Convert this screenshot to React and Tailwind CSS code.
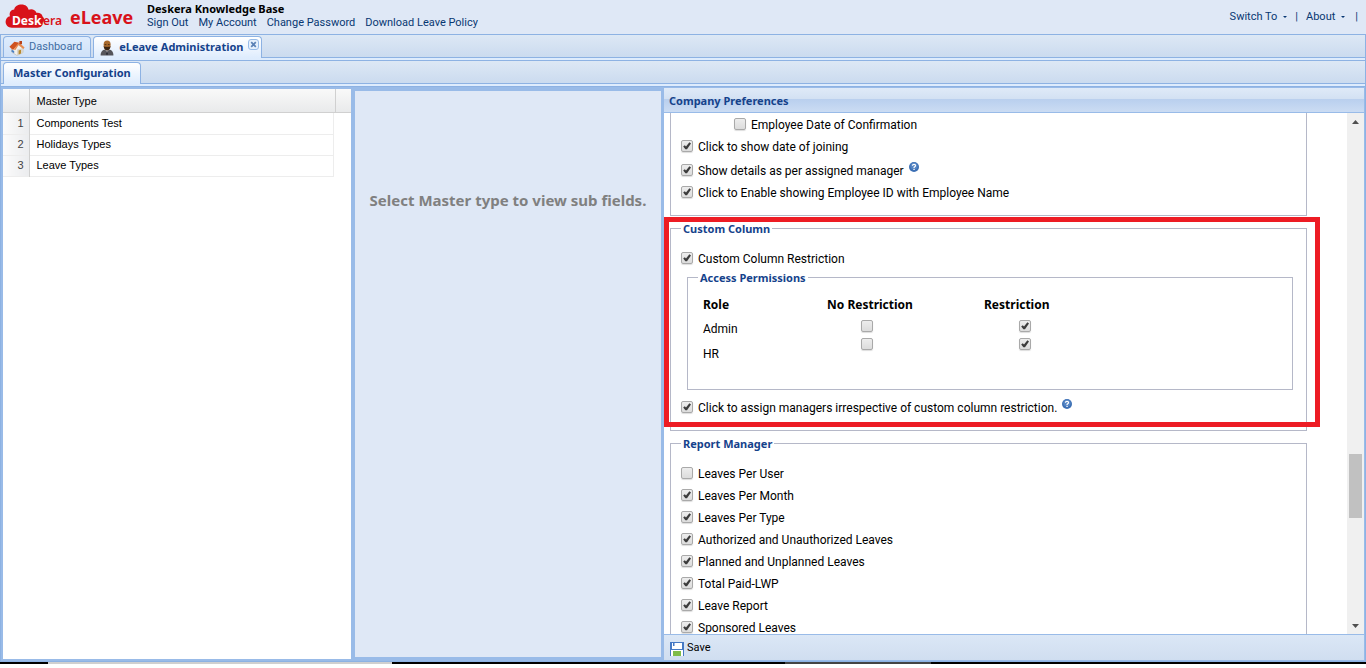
import { useState } from 'react';

const MASTER_TYPES = ['Components Test', 'Holidays Types', 'Leave Types'];

const REPORTS = [
  { label: 'Leaves Per User', on: false },
  { label: 'Leaves Per Month', on: true },
  { label: 'Leaves Per Type', on: true },
  { label: 'Authorized and Unauthorized Leaves', on: true },
  { label: 'Planned and Unplanned Leaves', on: true },
  { label: 'Total Paid-LWP', on: true },
  { label: 'Leave Report', on: true },
  { label: 'Sponsored Leaves', on: true },
];

function Check({ on, id, label }) {
  const [checked, setChecked] = useState(on);
  return (
    <span className="relative block h-3 w-3 shrink-0">
      <input
        id={id}
        type="checkbox"
        aria-label={label}
        checked={checked}
        onChange={(e) => setChecked(e.target.checked)}
        className="block h-3 w-3 appearance-none rounded-xs border border-[#a9a9a9] bg-linear-to-b from-[#ededed] to-[#dcdcdc] shadow-[0_1px_1px_#dddddd]"
      />
      {checked && (
        <svg viewBox="0 0 12 12" className="pointer-events-none absolute inset-0 h-3 w-3">
          <path d="M2.2 6.6 L3.8 5.2 L5 6.4 L8.4 2.2 L10 3.4 L6 9.2 L4.4 9.2 Z" fill="#3c3c3c" />
        </svg>
      )}
    </span>
  );
}

function CheckRow({ id, label, on = true, className = '', help = false }) {
  return (
    <div className={`flex h-[22px] items-center ${className}`}>
      <Check id={id} on={on} />
      <label htmlFor={id} className="pt-0.5 pl-[5px] whitespace-nowrap">{label}</label>
      {help && <HelpIcon />}
    </div>
  );
}

function HelpIcon() {
  return (
    <svg viewBox="0 0 10 10" className="mb-1.5 ml-[5px] h-2.5 w-2.5 shrink-0">
      <circle cx="5" cy="5" r="5" fill="#3c6fb4" />
      <circle cx="5" cy="4" r="3.6" fill="#5585c4" />
      <path d="M3.4 3.8 Q3.5 2.3 5 2.3 Q6.6 2.3 6.6 3.6 Q6.6 4.5 5.1 5.2 V6" fill="none" stroke="#fff" strokeWidth="1.2" />
      <rect x="4.4" y="6.8" width="1.3" height="1.2" fill="#fff" />
    </svg>
  );
}

function Section({ title, className = '', children }) {
  return (
    <fieldset className={`border border-[#b5b8c8] px-2.5 ${className}`}>
      <legend className="px-0.5 font-['Noto_Sans',sans-serif] text-[11px] leading-[15px] font-bold text-[#15428b]">{title}</legend>
      {children}
    </fieldset>
  );
}

function Logo() {
  return (
    <div className="flex h-[34px] w-[141px] shrink-0 items-center">
      <svg viewBox="0 0 66 34" className="h-[34px] w-[66px]">
        <path
          d="M12 27.8 C8 27.8 5.6 25 5.6 21.8 C5.6 18.5 7.6 16.6 10 16.2 C8.8 12.5 11 9.4 14.2 9.4 C14.8 6 18 4.4 21.5 4.4 C25.5 4.4 28 6.6 28.6 9.8 C31.5 8.4 35.5 9.6 36.4 12.8 C39.5 12.4 42 13.8 42.6 16.4 C44.8 18.2 44.6 21 42.8 22.6 C43 25.8 40.6 27.8 37.5 27.8 Z"
          fill="#d8121a"
        />
        <text x="12" y="25" fontSize="12" fontWeight="700" fontFamily="'Noto Sans', sans-serif" fill="#fff">Desk</text>
        <text x="43" y="25" fontSize="12" fontWeight="600" fontFamily="'Noto Sans', sans-serif" fill="#d8121a">era</text>
      </svg>
      <span className="pl-1 font-['Open_Sans',sans-serif] text-[18px] font-bold text-[#d8121a]">eLeave</span>
    </div>
  );
}

function HouseIcon() {
  return (
    <svg viewBox="0 0 16 16" className="h-4 w-4 shrink-0">
      <path d="M2.5 7.5 L9.5 5 L14 8 L14 12.5 L8 15.5 L2.5 12 Z" fill="#f3f0ea" stroke="#b9b4ab" strokeWidth="0.6" />
      <path d="M8 9.5 L14 8 V12.6 L8 15.5 Z" fill="#d9d5cc" />
      <path d="M0.4 6.8 L5.4 1.8 L10.4 2.8 L5.6 8.2 L4 10 Z" fill="#cf5320" />
      <path d="M10 2.4 L15.6 7.4 L14.2 9 L9.6 5 L6.4 10 L4.6 9.4 Z" fill="#e88a4e" />
      <rect x="10.4" y="1" width="2.6" height="3.2" fill="#b8421a" />
      <path d="M9.6 10.6 L12 9.8 V13.4 L9.6 14.5 Z" fill="#b88a2e" />
      <path d="M2.6 9.6 L5.2 11 V13.2 L2.6 11.8 Z" fill="#4a82c6" />
    </svg>
  );
}

function UserIcon() {
  return (
    <svg viewBox="0 0 14 16" className="h-4 w-3.5 shrink-0">
      <path d="M0.6 15.5 C0.6 11.6 2.6 10 5 9.6 H9 C11.6 10 13.4 11.6 13.4 15.5 Z" fill="#55555a" />
      <path d="M5.4 9.6 L7 13.6 L8.6 9.6 Z" fill="#e9e9ee" />
      <path d="M6.6 10.6 H7.4 L7.8 14 L7 15.2 L6.2 14 Z" fill="#22222a" />
      <path d="M3.6 4.6 C3.6 2 5 0.6 7.2 0.6 C9.4 0.6 10.6 2 10.6 4.6 C10.6 8 9.2 10.2 7.1 10.2 C5 10.2 3.6 8 3.6 4.6 Z" fill="#a8692c" />
      <path d="M3.6 5.8 C4.4 7.4 5.4 6.6 7.1 7 C8.8 6.6 9.8 7.4 10.6 5.8 C10.4 8.6 9.2 10.4 7.1 10.4 C5 10.4 3.8 8.6 3.6 5.8 Z" fill="#3a2412" />
      <path d="M4.6 4.6 H6.4 M7.9 4.6 H9.6" stroke="#3a2412" strokeWidth="0.8" />
    </svg>
  );
}

function CloseIcon() {
  return (
    <svg viewBox="0 0 11 11" className="h-[11px] w-[11px]">
      <rect x="0.5" y="0.5" width="10" height="10" rx="2.5" fill="#e6f0fc" stroke="#97bbe8" />
      <path d="M3.2 3.2 L7.8 7.8 M7.8 3.2 L3.2 7.8" stroke="#5b81b5" strokeWidth="1.7" />
    </svg>
  );
}

function SaveIcon() {
  return (
    <svg viewBox="0 0 14 14" className="h-3.5 w-3.5 shrink-0">
      <path d="M0 0 H14 V14 H0 Z" fill="#4579c4" />
      <rect x="2" y="1" width="10" height="6" fill="#fff" />
      <rect x="3" y="0" width="1.5" height="4" fill="#4579c4" />
      <rect x="1" y="8" width="12" height="6" fill="#fff" />
      <rect x="3" y="9" width="8" height="5" fill="#7ebc48" />
    </svg>
  );
}

function Caret() {
  return (
    <svg viewBox="0 0 4 2" className="h-0.5 w-1">
      <path d="M0 0 H4 L2 2 Z" fill="#083772" />
    </svg>
  );
}

function Header() {
  return (
    <header className="flex h-[34px] shrink-0">
      <Logo />
      <div className="pt-0.5 pl-1.5">
        <div className="font-['Noto_Sans',sans-serif] text-[11px] leading-[13px] font-bold text-black">Deskera Knowledge Base</div>
        <nav className="flex gap-2.5 text-[11px] leading-[15px] text-[#083772]">
          <a href="#signout">Sign Out</a>
          <a href="#account">My Account</a>
          <a href="#password">Change Password</a>
          <a href="#policy">Download Leave Policy</a>
        </nav>
      </div>
      <div className="ml-auto flex items-center pr-2 text-[11px] text-[#083772]">
        <button type="button" className="flex items-center gap-1.5">Switch To <Caret /></button>
        <span className="px-2">|</span>
        <button type="button" className="flex items-center gap-1.5">About <Caret /></button>
        <span className="pl-2.5">|</span>
      </div>
    </header>
  );
}

function Tabs() {
  return (
    <div className="shrink-0 border-x border-[#8db2e3] bg-[#deecfd] text-[11px]">
      <div className="flex h-6 items-end border-y border-[#8db2e3] bg-linear-to-b from-[#dde8f5] to-[#cbdbef] pl-0.5">
        <button type="button" className="flex h-[21px] items-center gap-1 rounded-t-sm border border-b-0 border-[#8db2e3] bg-linear-to-b from-[#deecfd] to-[#cfe1f8] pt-px pr-2 pl-[5px] text-[#416da3]">
          <HouseIcon />
          Dashboard
        </button>
        <button type="button" className="-mb-px ml-0.5 flex h-[22px] items-center rounded-t-sm border border-b-0 border-[#8db2e3] bg-linear-to-b from-white to-[#deecfd] pr-0.5 pl-1.5 font-['Noto_Sans',sans-serif] font-bold text-[#15428b]">
          <UserIcon />
          <span className="px-[5px]">eLeave Administration</span>
          <span className="mb-1.5"><CloseIcon /></span>
        </button>
      </div>
      <div className="mt-0.5 flex h-6 items-end border-y border-[#8db2e3] bg-linear-to-b from-[#dde8f5] to-[#cbdbef] pl-0.5">
        <button type="button" className="-mb-px flex h-[22px] items-center rounded-t-sm border border-b-0 border-[#8db2e3] bg-linear-to-b from-white to-[#deecfd] px-[9px] font-['Noto_Sans',sans-serif] font-bold text-[#15428b]">
          Master Configuration
        </button>
      </div>
      <div className="h-0.5" />
    </div>
  );
}

function MasterGrid() {
  return (
    <section className="w-[348px] shrink-0 bg-white font-['Liberation_Sans',sans-serif] text-[11px] text-black">
      <div className="border-b border-[#d0d0d0] bg-linear-to-b from-[#f9f9f9] to-[#e9eaeb]">
        <table className="w-[333px] table-fixed">
          <thead>
            <tr className="h-[23px] text-left">
              <th className="w-[26px] border-r border-[#d0d0d0]" aria-label="Row" />
              <th className="border-r border-[#d0d0d0] pt-0.5 pl-[7px] font-normal">Master Type</th>
            </tr>
          </thead>
        </table>
      </div>
      <table className="w-[331px] table-fixed">
        <tbody>
          {MASTER_TYPES.map((name, i) => (
            <tr key={name} className="h-[21px] border-r border-b border-[#ededed]">
              <td className="w-[26px] border-r border-[#d0d0d0] bg-linear-to-r from-[#fbfbfb] to-[#ebecee] pr-[5px] text-right text-[#444444]">{i + 1}</td>
              <td className="pl-[7px]">{name}</td>
            </tr>
          ))}
        </tbody>
      </table>
    </section>
  );
}

function ScrollBar() {
  return (
    <div className="flex w-[17px] shrink-0 flex-col items-center bg-[#f0f0f0]">
      <button type="button" aria-label="Scroll up" className="flex h-[17px] w-full items-center justify-center">
        <svg viewBox="0 0 7 4" className="h-1 w-[7px]"><path d="M0 4 L3.5 0 L7 4 Z" fill="#505050" /></svg>
      </button>
      <div className="grow-[324]" />
      <div className="h-16 w-[13px] bg-[#c1c1c1]" />
      <div className="grow-[99]" />
      <button type="button" aria-label="Scroll down" className="flex h-[17px] w-full items-center justify-center">
        <svg viewBox="0 0 7 4" className="h-1 w-[7px]"><path d="M0 0 H7 L3.5 4 Z" fill="#505050" /></svg>
      </button>
    </div>
  );
}

function AccessTable() {
  return (
    <table className="mt-1.5 ml-[5px] text-left">
      <thead className="font-['Noto_Sans',sans-serif]">
        <tr className="h-[27px]">
          <th className="w-[124px] font-bold">Role</th>
          <th className="w-[157px] font-bold">No Restriction</th>
          <th className="font-bold">Restriction</th>
        </tr>
      </thead>
      <tbody>
        <tr className="h-[19px]">
          <td className="pt-0.5">Admin</td>
          <td className="pt-0.5 pl-[34px] align-top"><Check on={false} label="Admin: No Restriction" /></td>
          <td className="pt-0.5 pl-[35px] align-top"><Check on label="Admin: Restriction" /></td>
        </tr>
        <tr className="h-[30px]">
          <td className="pt-0.5">HR</td>
          <td className="pl-[34px] align-top"><Check on={false} label="HR: No Restriction" /></td>
          <td className="pl-[35px] align-top"><Check on label="HR: Restriction" /></td>
        </tr>
      </tbody>
    </table>
  );
}

function Preferences() {
  return (
    <section className="flex min-w-0 flex-1 flex-col bg-white">
      <h2 className="flex h-[25px] shrink-0 items-center border-b border-[#99bbe8] bg-[linear-gradient(#dfeaf8,#d3e1f3_44%,#b9cfee_46%,#cbdcf3)] pt-0.5 pl-[5px] font-['Noto_Sans',sans-serif] text-[11px] font-bold text-[#15428b]">
        Company Preferences
      </h2>
      <div className="flex min-h-0 flex-1">
        <div className="min-w-0 flex-1 overflow-hidden pr-10 pl-1.5 text-[12px] text-black">
          <div className="border border-t-0 border-[#b5b8c8] px-2.5 pb-3">
            <CheckRow id="confirmation" label="Employee Date of Confirmation" on={false} className="pl-[53px]" />
            <CheckRow id="joining" label="Click to show date of joining" />
            <CheckRow id="manager" label="Show details as per assigned manager" className="mt-0.5" help />
            <CheckRow id="empid" label="Click to Enable showing Employee ID with Employee Name" />
          </div>

          <div className="relative mt-[5px]">
            <Section title="Custom Column" className="pb-3">
              <CheckRow id="restriction" label="Custom Column Restriction" className="mt-[11px]" />
              <Section title="Access Permissions" className="mt-px mr-[3px] ml-1.5 h-[120px]">
                <AccessTable />
              </Section>
              <CheckRow id="assign" label="Click to assign managers irrespective of custom column restriction." className="mt-1.5" help />
            </Section>
            <div className="pointer-events-none absolute -top-1 -right-[13px] bottom-1 -left-1.5 border-[5px] border-[#ed1c24]" />
          </div>

          <Section title="Report Manager" className="mt-[5px] pb-3">
            <div className="pt-[11px]">
              {REPORTS.map((r, i) => (
                <CheckRow key={r.label} id={`report-${i}`} label={r.label} on={r.on} />
              ))}
            </div>
          </Section>
        </div>
        <ScrollBar />
      </div>
      <footer className="flex h-[26px] shrink-0 items-center border-t border-[#99bbe8] bg-linear-to-b from-[#dbe7f6] to-[#d0def0] pt-0.5 pl-1.5 text-[11px] text-black">
        <button type="button" className="flex items-center gap-[3px]">
          <SaveIcon />
          Save
        </button>
      </footer>
    </section>
  );
}

export default function App() {
  return (
    <div className="flex h-screen flex-col overflow-hidden bg-white font-[Roboto,sans-serif]">
      <div className="flex min-h-0 flex-1 flex-col bg-[#dfe8f6]">
        <Header />
        <Tabs />
        <main className="flex min-h-0 flex-1 border-x border-y border-[#8db2e3] bg-[#99bbe8] pt-px pr-px pb-px pl-0.5">
          <div className="flex pt-px pb-px">
            <MasterGrid />
          </div>
          <section className="mt-[3px] mr-[3px] mb-[3px] ml-1 w-[306px] shrink-0 bg-[#dfe8f6] pt-[97px] text-center font-['Noto_Sans',sans-serif] text-[15px] leading-6 font-bold text-[#808080]">
            Select Master type to view sub fields.
          </section>
          <Preferences />
        </main>
      </div>
      <div className="flex h-0.5 shrink-0 bg-black">
        <div className="w-[48px]" />
        <div className="w-[344px] bg-[#d0d0d0]" />
        <div className="w-[393px]" />
        <div className="w-[146px] bg-[#444444]" />
      </div>
      <div className="h-1 shrink-0 bg-white" />
    </div>
  );
}
